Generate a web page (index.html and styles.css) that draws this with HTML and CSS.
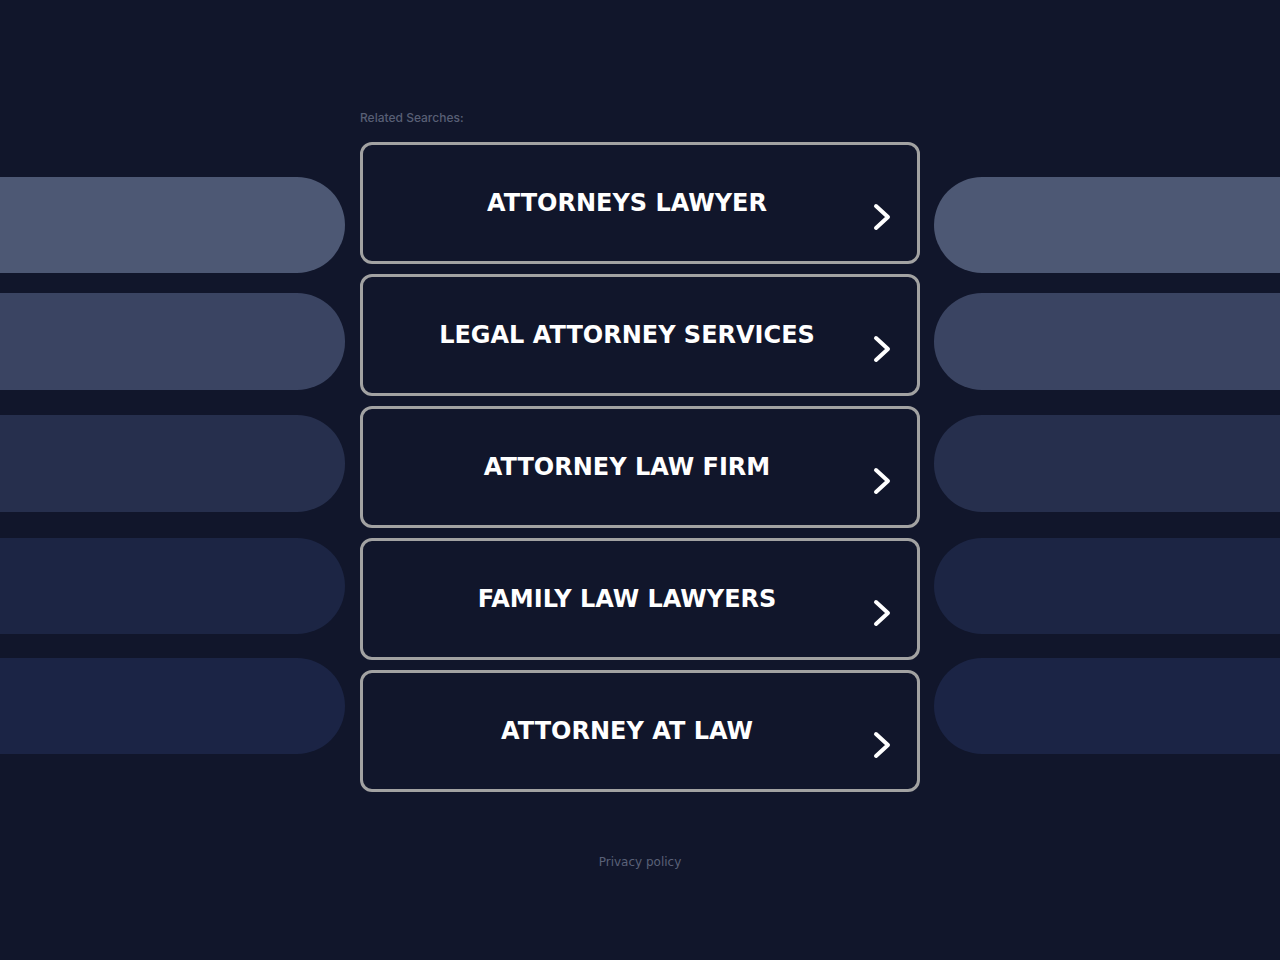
FILE: index.html
```html
<!DOCTYPE html>
<html>
<head>
<meta charset="utf-8">
<link rel="stylesheet" href="styles.css">
</head>
<body>
<div class="page">
  <div class="side left">
    <div class="pill p1"></div>
    <div class="pill p2"></div>
    <div class="pill p3"></div>
    <div class="pill p4"></div>
    <div class="pill p5"></div>
  </div>
  <div class="center">
    <div class="label">Related Searches:</div>
    <div class="list">
      <a class="item" href="#"><span class="text">ATTORNEYS LAWYER</span><svg class="chev" viewBox="0 0 22 30" width="22" height="30"><path d="M5 4 L17 15 L5 26" fill="none" stroke="#fff" stroke-width="4" stroke-linecap="round" stroke-linejoin="round"/></svg></a>
      <a class="item" href="#"><span class="text">LEGAL ATTORNEY SERVICES</span><svg class="chev" viewBox="0 0 22 30" width="22" height="30"><path d="M5 4 L17 15 L5 26" fill="none" stroke="#fff" stroke-width="4" stroke-linecap="round" stroke-linejoin="round"/></svg></a>
      <a class="item" href="#"><span class="text">ATTORNEY LAW FIRM</span><svg class="chev" viewBox="0 0 22 30" width="22" height="30"><path d="M5 4 L17 15 L5 26" fill="none" stroke="#fff" stroke-width="4" stroke-linecap="round" stroke-linejoin="round"/></svg></a>
      <a class="item" href="#"><span class="text">FAMILY LAW LAWYERS</span><svg class="chev" viewBox="0 0 22 30" width="22" height="30"><path d="M5 4 L17 15 L5 26" fill="none" stroke="#fff" stroke-width="4" stroke-linecap="round" stroke-linejoin="round"/></svg></a>
      <a class="item" href="#"><span class="text">ATTORNEY AT LAW</span><svg class="chev" viewBox="0 0 22 30" width="22" height="30"><path d="M5 4 L17 15 L5 26" fill="none" stroke="#fff" stroke-width="4" stroke-linecap="round" stroke-linejoin="round"/></svg></a>
    </div>
    <div class="footer"><a href="#">Privacy policy</a></div>
  </div>
  <div class="side right">
    <div class="pill p1"></div>
    <div class="pill p2"></div>
    <div class="pill p3"></div>
    <div class="pill p4"></div>
    <div class="pill p5"></div>
  </div>
</div>
</body>
</html>
```
FILE: styles.css
```css
html, body {
  margin: 0;
  padding: 0;
  background: #11162b;
  height: 100%;
}
body {
  font-family: "DejaVu Sans", sans-serif;
}
.page {
  display: flex;
  width: 1280px;
  height: 960px;
}
.side {
  display: flex;
  flex-direction: column;
  padding-top: 177px;
}
.left { width: 345px; margin-right: 15px; }
.right { width: 346px; margin-left: 14px; }
.pill {
  height: 96px;
  flex: none;
}
.left .pill { border-radius: 0 48px 48px 0; }
.right .pill { border-radius: 48px 0 0 48px; }
.p1 { background: #4d5874; }
.p2 { background: #3a4462; margin-top: 20px; height: 97px; }
.p3 { background: #262f4d; margin-top: 25px; height: 97px; }
.p4 { background: #1c2544; margin-top: 26px; }
.p5 { background: #1b2445; margin-top: 24px; }
.center {
  width: 560px;
  flex: none;
  padding-top: 110px;
}
.label {
  font-family: "Inter", sans-serif;
  font-weight: 500;
  font-size: 12px;
  color: #585f75;
  line-height: 16px;
  height: 16px;
  margin-bottom: 16px;
}
.list {
  display: flex;
  flex-direction: column;
  gap: 10px;
}
.item {
  position: relative;
  display: flex;
  align-items: center;
  justify-content: center;
  box-sizing: border-box;
  height: 122px;
  border: 3px solid #a2a2a2;
  border-radius: 12px;
  text-decoration: none;
  padding-right: 26px;
}
.text {
  color: #ffffff;
  font-weight: bold;
  font-size: 24px;
}
.chev {
  position: absolute;
  left: 508px;
  top: 57px;
}
.footer {
  text-align: center;
  margin-top: 62px;
  font-size: 12px;
  line-height: 16px;
}
.footer a {
  color: #5a6178;
  text-decoration: none;
}
```
